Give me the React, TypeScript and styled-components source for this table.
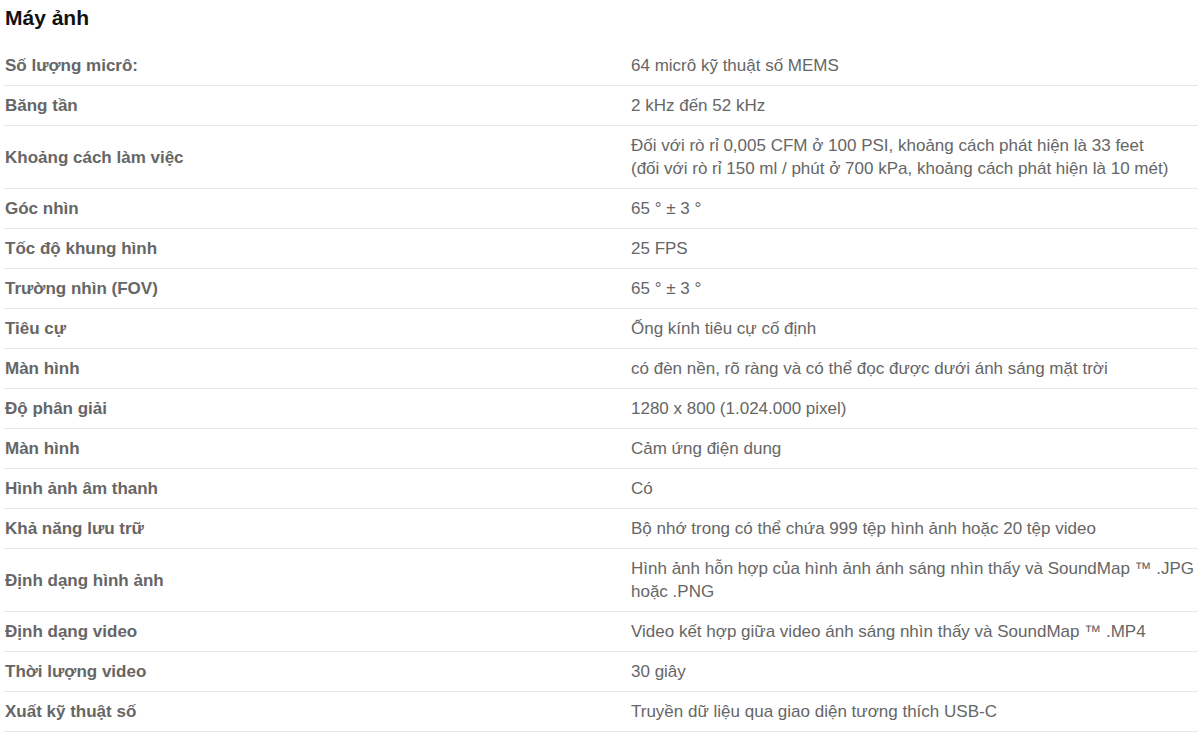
import React from 'react'
import styled, { createGlobalStyle } from 'styled-components'

const specs: [string, string[]][] = [
  ['Số lượng micrô:', ['64 micrô kỹ thuật số MEMS']],
  ['Băng tần', ['2 kHz đến 52 kHz']],
  [
    'Khoảng cách làm việc',
    [
      'Đối với rò rỉ 0,005 CFM ở 100 PSI, khoảng cách phát hiện là 33 feet',
      '(đối với rò rỉ 150 ml / phút ở 700 kPa, khoảng cách phát hiện là 10 mét)',
    ],
  ],
  ['Góc nhìn', ['65 ° ± 3 °']],
  ['Tốc độ khung hình', ['25 FPS']],
  ['Trường nhìn (FOV)', ['65 ° ± 3 °']],
  ['Tiêu cự', ['Ống kính tiêu cự cố định']],
  ['Màn hình', ['có đèn nền, rõ ràng và có thể đọc được dưới ánh sáng mặt trời']],
  ['Độ phân giải', ['1280 x 800 (1.024.000 pixel)']],
  ['Màn hình', ['Cảm ứng điện dung']],
  ['Hình ảnh âm thanh', ['Có']],
  ['Khả năng lưu trữ', ['Bộ nhớ trong có thể chứa 999 tệp hình ảnh hoặc 20 tệp video']],
  ['Định dạng hình ảnh', ['Hình ảnh hỗn hợp của hình ảnh ánh sáng nhìn thấy và SoundMap ™ .JPG', 'hoặc .PNG']],
  ['Định dạng video', ['Video kết hợp giữa video ánh sáng nhìn thấy và SoundMap ™ .MP4']],
  ['Thời lượng video', ['30 giây']],
  ['Xuất kỹ thuật số', ['Truyền dữ liệu qua giao diện tương thích USB-C']],
]

const App = () => {
  return (
    <Page>
      <GlobalStyle />
      <Title>Máy ảnh</Title>
      <Table>
        {specs.map(([label, value], i) => (
          <Row key={i}>
            <Label>{label}</Label>
            <Value>
              {value.map((line, j) => (
                <span key={j}>
                  {line}
                  {j < value.length - 1 && <br />}
                </span>
              ))}
            </Value>
          </Row>
        ))}
      </Table>
    </Page>
  )
}

const GlobalStyle = createGlobalStyle`
  body {
    margin: 0;
    background: #fff;
    font-family: "Liberation Sans", Arial, sans-serif;
  }
`

const Page = styled.div`
  padding: 6px 0 0 4px;
`

const Title = styled.h3`
  margin: 0 0 16px 1px;
  font-size: 21px;
  line-height: 24px;
  font-weight: bold;
  color: #111;
`

const Table = styled.div`
  display: flex;
  flex-direction: column;
`

const Row = styled.div`
  display: grid;
  grid-template-columns: 627px 1fr;
  border-bottom: 1px solid #e6e6e6;
  font-size: 17px;
  line-height: 23px;
  color: #666;
`

const Label = styled.div`
  padding: 8px 0 8px 1px;
  font-weight: bold;
  display: flex;
  align-items: center;
`

const Value = styled.div`
  padding: 8px 0;
`

export default App
